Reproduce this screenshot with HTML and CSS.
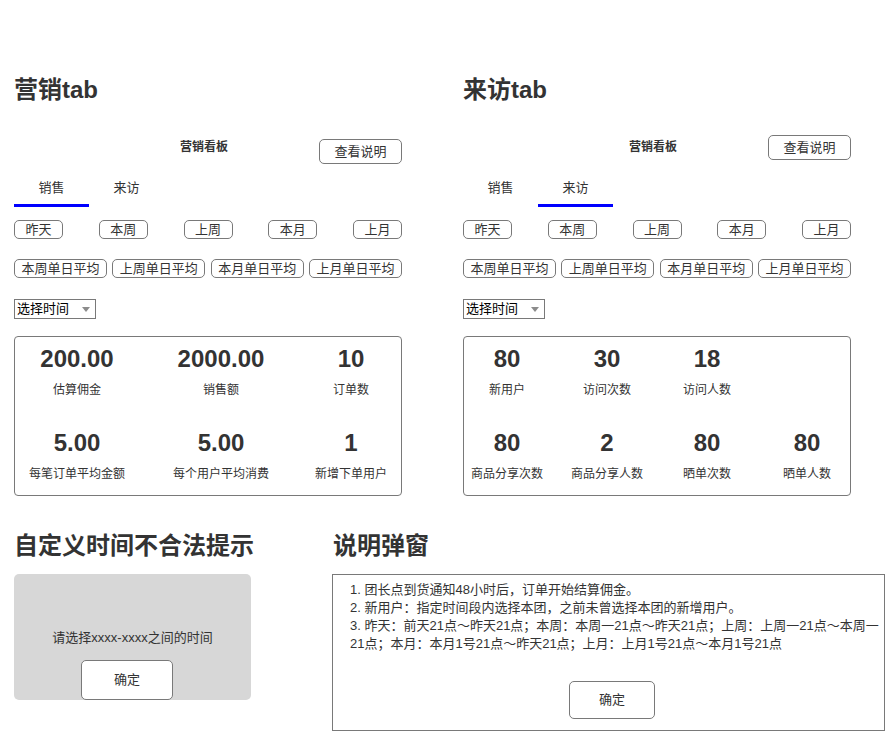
FILE: index.html
```html
<!DOCTYPE html>
<html lang="zh-CN">
<head>
<meta charset="utf-8">
<title>营销看板</title>
<link rel="stylesheet" href="styles.css">
</head>
<body>
<div class="page">
  <div class="top">
    <section class="panel">
      <h2 class="heading">营销tab</h2>
      <div class="board-head">
        <div class="board-title">营销看板</div>
        <div class="btn board-btn board-btn--low">查看说明</div>
      </div>
      <div class="tabs">
        <div class="tab tab--active">销售</div>
        <div class="tab">来访</div>
      </div>
      <div class="pills pills--short">
        <div class="pill">昨天</div>
        <div class="pill">本周</div>
        <div class="pill">上周</div>
        <div class="pill">本月</div>
        <div class="pill">上月</div>
      </div>
      <div class="pills pills--long">
        <div class="pill">本周单日平均</div>
        <div class="pill">上周单日平均</div>
        <div class="pill">本月单日平均</div>
        <div class="pill">上月单日平均</div>
      </div>
      <div class="select">选择时间<span class="caret"></span></div>
      <div class="stats stats--sales">
        <div class="stat"><div class="stat-num">200.00</div><div class="stat-label">估算佣金</div></div>
        <div class="stat"><div class="stat-num">2000.00</div><div class="stat-label">销售额</div></div>
        <div class="stat"><div class="stat-num">10</div><div class="stat-label">订单数</div></div>
        <div class="stat"><div class="stat-num">5.00</div><div class="stat-label">每笔订单平均金额</div></div>
        <div class="stat"><div class="stat-num">5.00</div><div class="stat-label">每个用户平均消费</div></div>
        <div class="stat"><div class="stat-num">1</div><div class="stat-label">新增下单用户</div></div>
      </div>
    </section>

    <section class="panel">
      <h2 class="heading">来访tab</h2>
      <div class="board-head">
        <div class="board-title">营销看板</div>
        <div class="btn board-btn">查看说明</div>
      </div>
      <div class="tabs">
        <div class="tab">销售</div>
        <div class="tab tab--active">来访</div>
      </div>
      <div class="pills pills--short">
        <div class="pill">昨天</div>
        <div class="pill">本周</div>
        <div class="pill">上周</div>
        <div class="pill">本月</div>
        <div class="pill">上月</div>
      </div>
      <div class="pills pills--long">
        <div class="pill">本周单日平均</div>
        <div class="pill">上周单日平均</div>
        <div class="pill">本月单日平均</div>
        <div class="pill">上月单日平均</div>
      </div>
      <div class="select">选择时间<span class="caret"></span></div>
      <div class="stats stats--visit">
        <div class="stat"><div class="stat-num">80</div><div class="stat-label">新用户</div></div>
        <div class="stat"><div class="stat-num">30</div><div class="stat-label">访问次数</div></div>
        <div class="stat"><div class="stat-num">18</div><div class="stat-label">访问人数</div></div>
        <div class="stat"></div>
        <div class="stat"><div class="stat-num">80</div><div class="stat-label">商品分享次数</div></div>
        <div class="stat"><div class="stat-num">2</div><div class="stat-label">商品分享人数</div></div>
        <div class="stat"><div class="stat-num">80</div><div class="stat-label">晒单次数</div></div>
        <div class="stat"><div class="stat-num">80</div><div class="stat-label">晒单人数</div></div>
      </div>
    </section>
  </div>

  <div class="bottom">
    <section class="tip-block">
      <h2 class="heading">自定义时间不合法提示</h2>
      <div class="tip-box">
        <div class="tip-text">请选择xxxx-xxxx之间的时间</div>
        <div class="btn tip-btn">确定</div>
      </div>
    </section>
    <section class="explain-block">
      <h2 class="heading">说明弹窗</h2>
      <div class="explain-box">
        <p class="explain-text">1. 团长点到货通知48小时后，订单开始结算佣金。<br>2. 新用户：指定时间段内选择本团，之前未曾选择本团的新增用户。<br>3. 昨天：前天21点～昨天21点；本周：本周一21点～昨天21点；上周：上周一21点～本周一21点；本月：本月1号21点～昨天21点；上月：上月1号21点～本月1号21点</p>
        <div class="btn explain-btn">确定</div>
      </div>
    </section>
  </div>
</div>
</body>
</html>
```

FILE: styles.css
```css
* { box-sizing: border-box; }

html, body {
  margin: 0;
  padding: 0;
  background: #ffffff;
}

body {
  font-family: "Liberation Sans", "Noto Sans CJK SC", sans-serif;
  color: #333333;
  font-size: 13px;
}

.page {
  width: 885px;
  padding-top: 74px;
}

.heading {
  margin: 0;
  font-size: 24px;
  line-height: 32px;
  font-weight: bold;
  color: #333333;
  white-space: nowrap;
}

.top {
  display: flex;
  gap: 61px;
  padding-left: 14px;
}

.panel {
  width: 388px;
}

.board-head {
  display: flex;
  align-items: flex-start;
  height: 25px;
  margin-top: 29px;
}

.board-title {
  margin-left: 166px;
  font-size: 12px;
  font-weight: bold;
  line-height: 25px;
}

.btn {
  border: 1px solid #797979;
  border-radius: 5px;
  background: #ffffff;
  text-align: center;
  font-size: 13px;
  color: #333333;
}

.board-btn {
  margin-left: auto;
  width: 83px;
  height: 25px;
  line-height: 23px;
}

.board-btn--low {
  margin-top: 4px;
}

.tabs {
  display: flex;
}

.tab {
  width: 75px;
  padding-top: 19px;
  height: 47px;
  line-height: 17px;
  text-align: center;
  font-size: 13px;
  border-bottom: 3px solid transparent;
}

.tab--active {
  border-bottom-color: #0000ff;
}

.pills {
  display: flex;
  justify-content: space-between;
}

.pills--short {
  margin-top: 13px;
}

.pills--long {
  margin-top: 20px;
}

.pill {
  height: 19px;
  border: 1px solid #797979;
  border-radius: 5px;
  font-size: 13px;
  line-height: 17px;
  text-align: center;
  color: #333333;
}

.pills--short .pill {
  width: 49px;
}

.pills--long .pill {
  width: 93px;
}

.select {
  margin-top: 21px;
  width: 82px;
  height: 20px;
  border: 1px solid #797979;
  font-size: 13px;
  line-height: 18px;
  color: #000000;
  padding-left: 2px;
  display: flex;
  align-items: center;
}

.caret {
  margin-left: auto;
  margin-right: 5px;
  width: 0;
  height: 0;
  border-left: 4px solid transparent;
  border-right: 4px solid transparent;
  border-top: 5px solid #8c8c8c;
}

.stats {
  margin-top: 17px;
  border: 1px solid #797979;
  border-radius: 4px;
  padding: 8px 0 12px;
  display: grid;
  row-gap: 30px;
}

.stats--sales {
  grid-template-columns: 124px 164px 96px;
}

.stats--visit {
  grid-template-columns: repeat(4, 100px);
  justify-content: center;
}

.stat {
  display: flex;
  flex-direction: column;
  align-items: center;
  white-space: nowrap;
}

.stat-num {
  font-size: 24px;
  font-weight: bold;
  line-height: 28px;
  color: #333333;
}

.stat-label {
  margin-top: 9px;
  font-size: 12px;
  line-height: 17px;
  color: #333333;
}

.bottom {
  display: flex;
  padding-left: 14px;
  margin-top: 34px;
}

.tip-block {
  width: 237px;
}

.tip-box {
  margin-top: 12px;
  height: 126px;
  background: #d7d7d7;
  border-radius: 5px;
  display: flex;
  flex-direction: column;
  align-items: center;
  padding-top: 55px;
}

.tip-text {
  font-size: 13px;
  line-height: 18px;
  color: #333333;
  white-space: nowrap;
}

.tip-btn {
  margin-top: 13px;
  margin-right: 11px;
  width: 92px;
  height: 40px;
  line-height: 38px;
}

.explain-block {
  margin-left: 81px;
  width: 553px;
}

.explain-block .heading {
  padding-left: 1px;
}

.explain-box {
  margin-top: 12px;
  border: 1px solid #797979;
  height: 157px;
  padding: 6px 4px 0 17px;
}

.explain-text {
  margin: 0;
  font-size: 13px;
  line-height: 18px;
  color: #333333;
}

.explain-btn {
  margin: 28px 0 0 219px;
  width: 86px;
  height: 38px;
  line-height: 36px;
}
```
